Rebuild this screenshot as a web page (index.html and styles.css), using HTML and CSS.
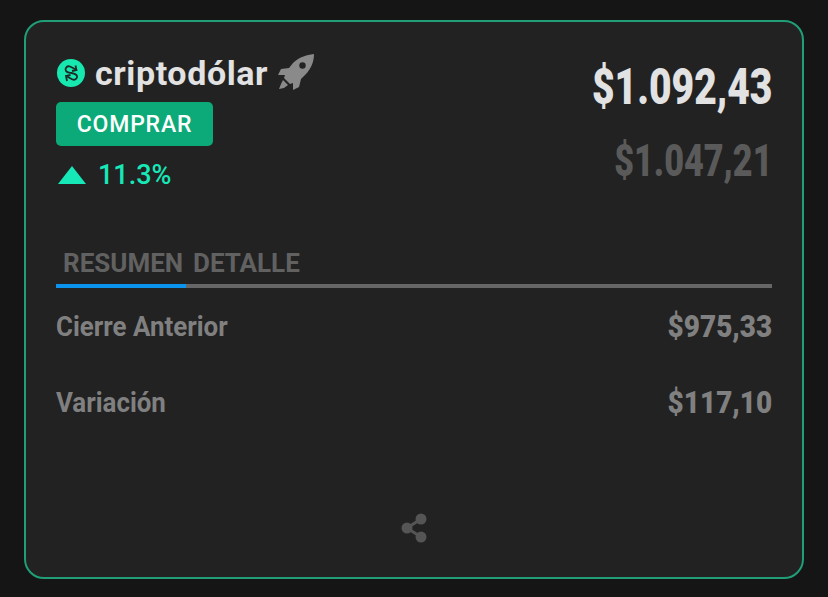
FILE: index.html

```html
<!DOCTYPE html>
<html lang="es">
<head>
    <meta charset="UTF-8">
    <meta name="viewport" content="width=device-width, initial-scale=1.0">
    <title>criptodólar</title>
    <link rel="stylesheet" href="styles.css">
</head>
<body>
    <div class="card">
        <div class="top">
            <div class="top-left">
                <div class="name-row">
                    <svg class="coin" viewBox="0 0 28 28">
                        <circle cx="14" cy="14" r="14" fill="#17e8b0"/>
                        <path d="M19 10.500 L13 7.500 C10 6.500 7.500 9.500 9 12 C10 13.800 12.500 13.600 14.500 14 C17 14.500 19.500 15 20 17 C20.600 19.600 17.800 21.400 15.500 20.500 L10 17.500" fill="none" stroke="#1b2a26" stroke-width="1.800"/>
                        <path d="M18.500 6.500 L19.500 11 L15 12 M10 22 L9 17 L13.500 16" fill="none" stroke="#1b2a26" stroke-width="1.800"/>
                    </svg>
                    <span class="name">criptodólar</span>
                    <svg class="rocket" viewBox="0 0 38 38">
                        <path d="M37 0 C29 1 22 3 16 9 L12 14 L4 15 L1 21 L8 21 L7 24 L13 30 L16 29 L16 36 L22 33 L24 25 L28 21 C34 15 37 8 37 0 Z" fill="#8a8a8a"/>
                        <circle cx="25.500" cy="11.500" r="3.200" fill="#222222"/>
                        <path d="M6 26 L11 31 L7 34 L2 35 L4 30 Z" fill="#8a8a8a"/>
                    </svg>
                </div>
                <button class="buy">COMPRAR</button>
                <div class="change">
                    <span class="arrow"></span>
                    <span>11.3%</span>
                </div>
            </div>
            <div class="prices">
                <div class="price">$1.092,43</div>
                <div class="price-old">$1.047,21</div>
            </div>
        </div>

        <div class="tabs">
            <div class="tab tab-active">RESUMEN</div>
            <div class="tab">DETALLE</div>
        </div>

        <div class="row">
            <span class="row-label">Cierre Anterior</span>
            <span class="row-value">$975,33</span>
        </div>
        <div class="row">
            <span class="row-label">Variación</span>
            <span class="row-value">$117,10</span>
        </div>

        <div class="share">
            <svg viewBox="0 0 26 30" width="26" height="30">
                <path d="M20 6 L6 15 L20 24" fill="none" stroke="#555555" stroke-width="3"/>
                <circle cx="20" cy="6" r="5.500" fill="#555555"/>
                <circle cx="6" cy="15" r="5.500" fill="#555555"/>
                <circle cx="20" cy="24" r="5.500" fill="#555555"/>
            </svg>
        </div>
    </div>
</body>
</html>
```

FILE: styles.css

```css
* {
    box-sizing: border-box;
}
body {
    margin: 0;
    height: 597px;
    padding: 20px 24px 18px;
    background-color: #151515;
    font-family: "Roboto", sans-serif;
    overflow: hidden;
}
.card {
    height: 559px;
    padding: 30px 30px 0;
    border: 2px solid #1f9e78;
    border-radius: 20px;
    background-color: #222222;
    display: flex;
    flex-direction: column;
}
.top {
    display: flex;
    justify-content: space-between;
    height: 188px;
}
.name-row {
    display: flex;
    align-items: center;
    gap: 10px;
    height: 42px;
}
.coin {
    width: 28px;
    height: 28px;
    margin-left: 1px;
}
.name {
    font-size: 34px;
    font-weight: bold;
    letter-spacing: 0.6px;
    color: #e2e2e2;
}
.rocket {
    width: 38px;
    height: 38px;
    margin-left: -1px;
}
.buy {
    display: block;
    width: 157px;
    height: 44px;
    margin-top: 8px;
    border: none;
    border-radius: 5px;
    background-color: #0caa78;
    color: #ffffff;
    font-family: inherit;
    font-size: 23px;
    font-weight: 500;
    letter-spacing: 0.8px;
}
.change {
    display: flex;
    align-items: center;
    gap: 12px;
    margin-top: 13px;
    font-size: 27px;
    font-weight: 500;
    color: #17e8b8;
}
.arrow {
    width: 0;
    height: 0;
    margin-left: 2px;
    border-left: 14px solid transparent;
    border-right: 14px solid transparent;
    border-bottom: 18px solid #17e8b8;
}
.prices {
    text-align: right;
}
.price {
    margin-top: 6px;
    font-size: 50px;
    font-weight: 900;
    color: #e2e2e2;
    transform: scaleX(0.78);
    transform-origin: right;
}
.price-old {
    margin-top: 18px;
    font-size: 45px;
    font-weight: 900;
    color: #5a5a5a;
    transform: scaleX(0.76);
    transform-origin: right;
}
.tabs {
    display: flex;
    height: 48px;
    border-bottom: 4px solid #666666;
}
.tab {
    padding: 8px 6px 0 7px;
    font-size: 26px;
    font-weight: bold;
    color: #616161;
    white-space: nowrap;
}
.tab-active {
    width: 130px;
    margin-bottom: -4px;
    border-bottom: 4px solid #0a94ee;
}
.row {
    display: flex;
    justify-content: space-between;
    align-items: center;
    height: 76px;
}
.row:first-of-type {
    margin-top: 5px;
}
.row-label {
    font-size: 28px;
    font-weight: bold;
    color: #808080;
    transform: scaleX(0.925);
    transform-origin: left;
}
.row-value {
    font-size: 31px;
    font-weight: 900;
    color: #808080;
    transform: scaleX(0.9);
    transform-origin: right;
}
.share {
    display: flex;
    justify-content: center;
    margin-top: 73px;
}
```
